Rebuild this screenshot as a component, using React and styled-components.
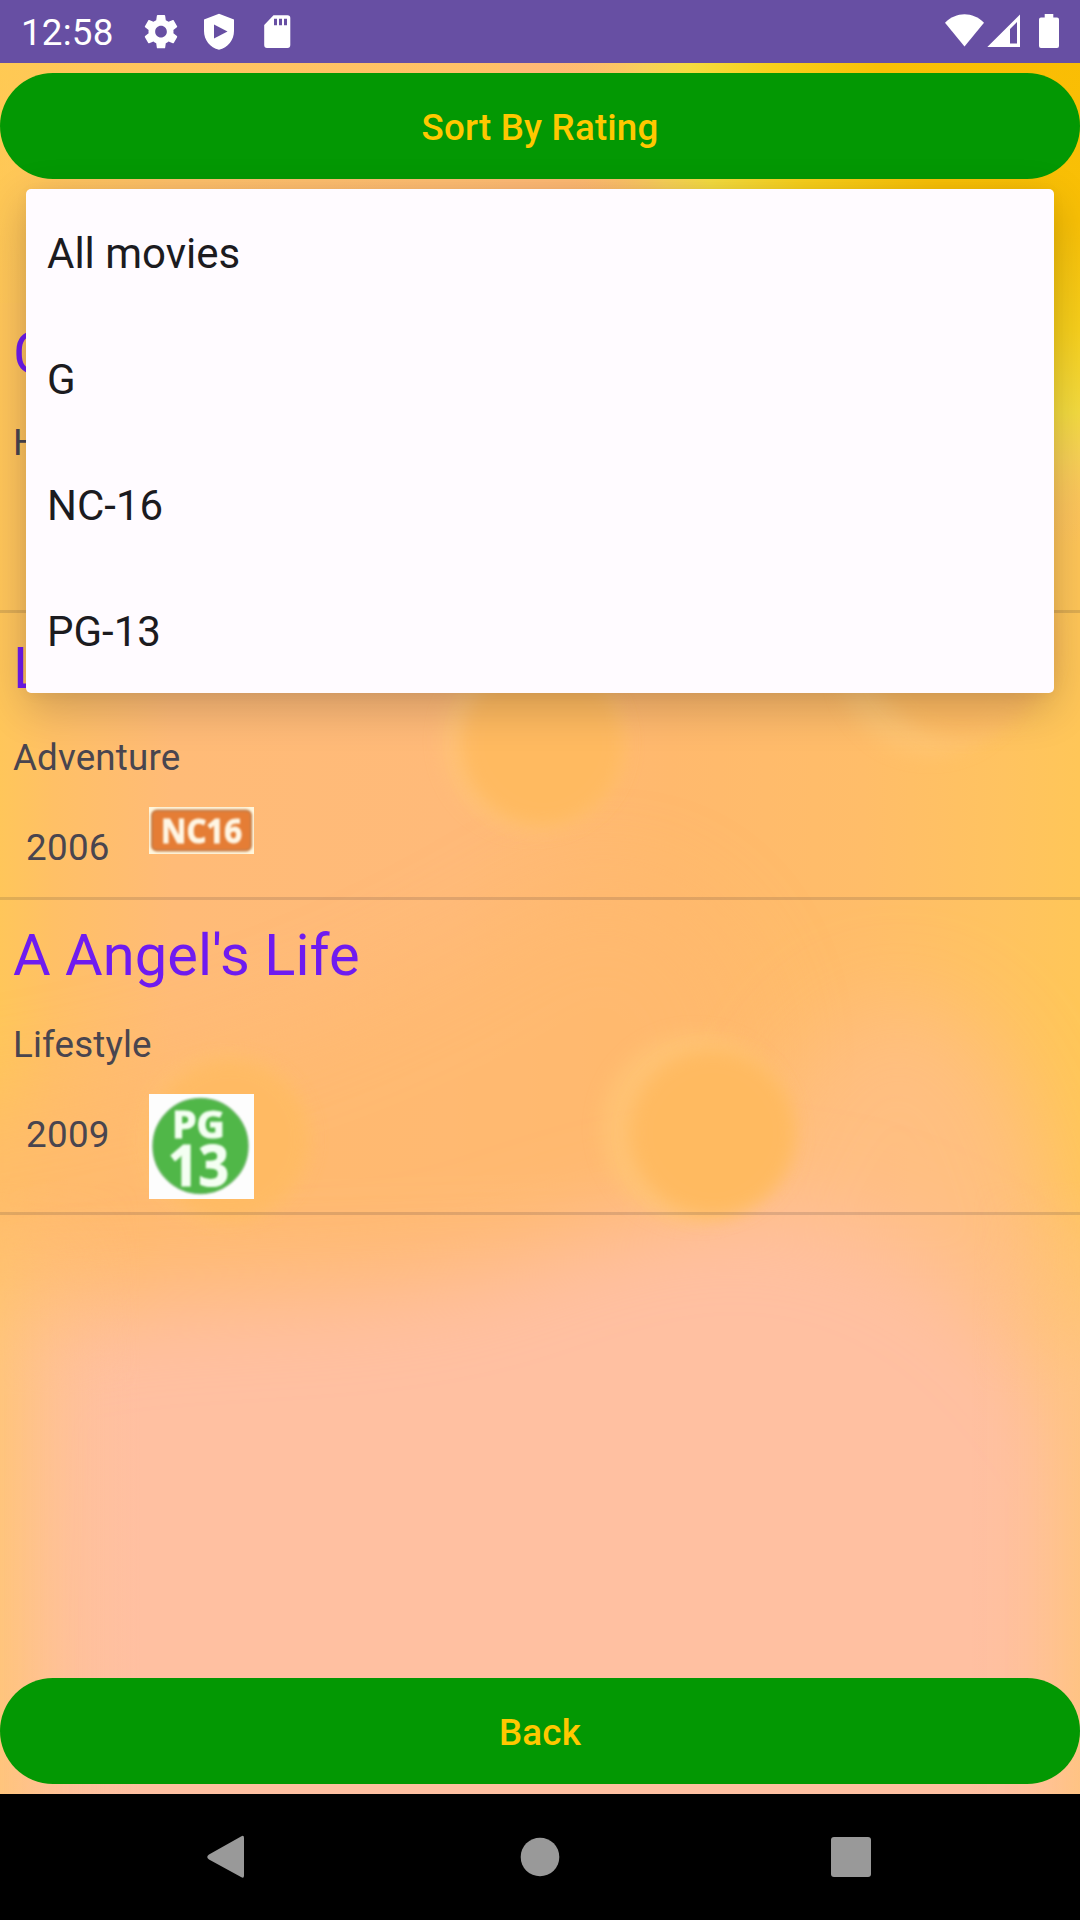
import React from "react";
import styled, { createGlobalStyle } from "styled-components";

const GlobalStyle = createGlobalStyle`
  * { box-sizing: border-box; }
  html, body { margin: 0; padding: 0; background: #000; }
`;

const Screen = styled.div`
  position: relative;
  display: flex;
  flex-direction: column;
  width: 1080px;
  height: 1920px;
  overflow: hidden;
  font-family: Roboto, "Noto Sans", sans-serif;
`;

const StatusBar = styled.header`
  display: flex;
  justify-content: space-between;
  height: 63px;
  padding: 0 21px 0 21px;
  background: #674fa3;
  color: #fff;
`;

const StatusGroup = styled.div`
  display: flex;
  align-items: center;
`;

const Clock = styled.span`
  width: 120px;
  font-size: 36.75px;
  line-height: 66px;
  padding-top: 3px;
  letter-spacing: 0.2px;
`;

const StatusIcon = styled.svg`
  display: block;
  width: ${(p) => p.$w}px;
  height: 63px;
  margin-left: ${(p) => p.$gap || 0}px;
  fill: #fff;
`;

const Content = styled.main`
  position: relative;
  display: flex;
  flex-direction: column;
  height: 1731px;
  padding: 10px 0;
`;

const Wallpaper = styled.svg`
  position: absolute;
  left: 0;
  top: 0;
  width: 1080px;
  height: 1731px;
`;

const PillButton = styled.button`
  position: relative;
  flex: none;
  height: 106px;
  border: 0;
  border-radius: 53px;
  padding: 3px 0 0;
  background: #039803;
  color: #ffc800;
  font: 500 36.75px/44px Roboto, "Noto Sans", sans-serif;
  letter-spacing: 0.18px;
`;

const SpinnerSlot = styled.div`
  position: relative;
  height: 119px;
  flex: none;
`;

const MovieList = styled.ul`
  position: relative;
  flex: 1;
  margin: 0;
  padding: 0;
  list-style: none;
`;

const MovieRow = styled.li`
  min-height: ${(p) => p.$minHeight || 0}px;
  padding: 13px;
  box-sizing: content-box;
  border-bottom: 3px solid rgba(30, 30, 40, 0.14);
`;

const Title = styled.div`
  height: 84px;
  font-size: 57.75px;
  line-height: 84px;
  letter-spacing: 0.06px;
  color: #6f1bf0;
`;

const Genre = styled.div`
  margin-top: 23px;
  height: 50px;
  font-size: 36.75px;
  line-height: 50px;
  letter-spacing: 0.15px;
  color: #49454f;
`;

const Details = styled.div`
  display: flex;
  align-items: flex-start;
  margin-top: 24px;
`;

const Year = styled.span`
  width: 136px;
  padding: 16px 0 11px 13px;
  font-size: 36.75px;
  line-height: 50px;
  letter-spacing: 0.3px;
  color: #49454f;
`;

const Badge = styled.svg`
  display: block;
  width: 105px;
  height: ${(p) => p.$h}px;
  overflow: visible;
`;

const Popup = styled.div`
  position: absolute;
  left: 26px;
  top: 189px;
  width: 1028px;
  display: flex;
  flex-direction: column;
  border-radius: 5px;
  background: #fffbff;
  box-shadow: 0 14px 46px rgba(0, 0, 0, 0.2), 0 2px 14px rgba(0, 0, 0, 0.04);
`;

const Option = styled.div`
  height: 126px;
  padding: 1px 21px 0;
  font-size: 42px;
  line-height: 127px;
  color: #1c1b1f;
`;

const NavBar = styled.nav`
  display: flex;
  height: 126px;
  background: #000;
`;

const NavIcon = styled.svg`
  display: block;
  width: 1080px;
  height: 126px;
  fill: #999;
`;

function Bubble({ rim, core, rimR = 94, coreR = 82, glow = 0.7, strength = 1 }) {
  return (
    <g>
      <circle cx={rim[0]} cy={rim[1]} r={rimR} fill="#ffc676" opacity={glow} filter="url(#softRim)" />
      <circle cx={core[0]} cy={core[1]} r={coreR} fill="#ffba60" opacity={strength} filter="url(#softCore)" />
    </g>
  );
}

function Backdrop() {
  return (
    <Wallpaper viewBox="0 63 1080 1731">
      <defs>
        <linearGradient id="base" x1="0" x2="1">
          <stop offset="0" stopColor="#ffc65a" />
          <stop offset="0.05" stopColor="#ffc066" />
          <stop offset="0.16" stopColor="#ffbb77" />
          <stop offset="0.42" stopColor="#ffba79" />
          <stop offset="0.62" stopColor="#ffb96d" />
          <stop offset="0.8" stopColor="#ffbd69" />
          <stop offset="0.93" stopColor="#ffc360" />
          <stop offset="1" stopColor="#ffc658" />
        </linearGradient>
        <linearGradient id="topLeft" x1="0" x2="0.5" y1="0" y2="1">
          <stop offset="0" stopColor="#ffcb50" />
          <stop offset="1" stopColor="#ffcb50" stopOpacity="0" />
        </linearGradient>
        <linearGradient id="edges" x1="0" x2="1">
          <stop offset="0" stopColor="#ffc47c" />
          <stop offset="0.05" stopColor="#ffc28c" stopOpacity="0.6" />
          <stop offset="0.13" stopColor="#ffc0a0" stopOpacity="0" />
          <stop offset="0.9" stopColor="#ffc0a0" stopOpacity="0" />
          <stop offset="0.96" stopColor="#ffc28e" stopOpacity="0.5" />
          <stop offset="1" stopColor="#ffc384" />
        </linearGradient>
        <linearGradient id="edgeFade" x1="0" x2="0" y1="0" y2="1">
          <stop offset="0" stopColor="#000" />
          <stop offset="0.35" stopColor="#fff" />
        </linearGradient>
        <mask id="edgeMask">
          <rect y="1180" width="1080" height="614" fill="url(#edgeFade)" />
        </mask>
        <radialGradient id="sun" gradientUnits="userSpaceOnUse" cx="1045" cy="56" r="490">
          <stop offset="0" stopColor="#fabd04" />
          <stop offset="0.34" stopColor="#f9c006" />
          <stop offset="0.56" stopColor="#f8d01c" />
          <stop offset="0.73" stopColor="#f5dc40" />
          <stop offset="0.82" stopColor="#f7d455" stopOpacity="0.85" />
          <stop offset="1" stopColor="#ffbf6b" stopOpacity="0" />
        </radialGradient>
        <filter id="softCore" x="-20%" y="-20%" width="140%" height="140%"><feGaussianBlur stdDeviation="9" /></filter>
        <filter id="softRim" x="-20%" y="-20%" width="140%" height="140%"><feGaussianBlur stdDeviation="9" /></filter>
        <filter id="softWave" x="-30%" y="-30%" width="160%" height="160%"><feGaussianBlur stdDeviation="46" /></filter>
      </defs>
      <rect y="63" width="1080" height="1731" fill="url(#base)" />
      <rect y="63" width="500" height="240" fill="url(#topLeft)" opacity="0.7" />
      <path d="M-100 1110C150 1080 350 1020 540 900C640 850 740 920 760 1050L700 1280L-100 1300Z" fill="#ffb96e" opacity="0.7" filter="url(#softWave)" />
      <path d="M690 1330C740 1160 800 1000 900 1000C980 1000 1050 1110 1070 1330Z" fill="#ffbf86" opacity="0.85" filter="url(#softWave)" />
      <path d="M-10 1340C120 1280 300 1315 480 1270C600 1230 700 1185 830 1220C960 1250 1040 1340 1110 1450L1110 1950L-40 1950Z" fill="#ffc0a1" filter="url(#softWave)" />
      <rect y="1180" width="1080" height="614" fill="url(#edges)" mask="url(#edgeMask)" />
      <rect y="63" width="1080" height="500" fill="url(#sun)" />
      <Bubble rim={[532, 741]} core={[543, 744]} rimR={90} coreR={81} glow={0.6} />
      <Bubble rim={[930, 663]} core={[962, 645]} rimR={92} coreR={92} strength={0.8} />
      <Bubble rim={[695, 1128]} core={[713, 1133]} />
      <Bubble rim={[222, 1139]} core={[230, 1139]} rimR={86} coreR={80} glow={0.4} strength={0.8} />
    </Wallpaper>
  );
}

const badgeFont = "'Open Sans', 'Noto Sans', sans-serif";

function Nc16Badge() {
  return (
    <Badge $h={47} viewBox="0 0 105 47">
      <rect width="105" height="47" fill="#fff6dc" />
      <g style={{ filter: "blur(0.9px)" }}>
        <rect x="3" y="3.5" width="99" height="40" rx="5" fill="#e57d35" stroke="#c47c48" strokeWidth="2" />
        <text x="12" y="36" textLength="81" lengthAdjust="spacingAndGlyphs" fontFamily={badgeFont} fontWeight="700" fontSize="34" fill="#fff6e4" stroke="#fff6e4" strokeWidth="1">NC16</text>
      </g>
    </Badge>
  );
}

function Pg13Badge() {
  return (
    <Badge $h={105} viewBox="0 0 105 105">
      <rect width="105" height="105" fill="#fdfdfd" />
      <g style={{ filter: "blur(0.9px)" }}>
        <circle cx="51.5" cy="52" r="47.5" fill="#50b748" stroke="#6cb767" strokeWidth="1.5" />
        <text fontFamily={badgeFont} fontWeight="700" fill="#f4fff2" stroke="#f4fff2" strokeWidth="1.2">
          <tspan x="23" y="44" fontSize="38" textLength="53" lengthAdjust="spacingAndGlyphs">PG</tspan>
          <tspan x="19" y="91.5" fontSize="57" textLength="61" lengthAdjust="spacingAndGlyphs">13</tspan>
        </text>
      </g>
    </Badge>
  );
}

const movies = [
  { title: "C", genre: "H", minHeight: 286 },
  { title: "L", genre: "Adventure", year: "2006", badge: <Nc16Badge /> },
  { title: "A Angel's Life", genre: "Lifestyle", year: "2009", badge: <Pg13Badge /> },
];

const ratings = ["All movies", "G", "NC-16", "PG-13"];

export default function App() {
  return (
    <>
      <GlobalStyle />
      <Screen>
        <StatusBar>
          <StatusGroup>
            <Clock>12:58</Clock>
            <StatusIcon $w={40} viewBox="0 0 40 63">
              <g transform="translate(0 11.7) scale(1.667)">
                <path d="M19.43 12.98c.04-.32.07-.64.07-.98s-.03-.66-.07-.98l2.11-1.65c.19-.15.24-.42.12-.64l-2-3.46c-.12-.22-.39-.3-.61-.22l-2.49 1c-.52-.4-1.08-.73-1.69-.98l-.38-2.65C14.46 2.18 14.25 2 14 2h-4c-.25 0-.46.18-.49.42l-.38 2.65c-.61.25-1.17.59-1.69.98l-2.49-1c-.23-.09-.49 0-.61.22l-2 3.46c-.13.22-.07.49.12.64l2.11 1.65c-.04.32-.07.65-.07.98s.03.66.07.98l-2.11 1.65c-.19.15-.24.42-.12.64l2 3.46c.12.22.39.3.61.22l2.49-1c.52.4 1.08.73 1.69.98l.38 2.65c.03.24.24.42.49.42h4c.25 0 .46-.18.49-.42l.38-2.65c.61-.25 1.17-.59 1.69-.98l2.49 1c.23.09.49 0 .61-.22l2-3.46c.12-.22.07-.49-.12-.64l-2.11-1.65zM12 15.5c-1.93 0-3.5-1.57-3.5-3.5s1.57-3.5 3.5-3.5 3.5 1.57 3.5 3.5-1.57 3.5-3.5 3.5z" />
              </g>
            </StatusIcon>
            <StatusIcon $w={30} $gap={23} viewBox="204 0 30 63">
              <path fillRule="evenodd" d="M219 13.7L234 19.5V31C234 40 228 47.500 219 49.800C210 47.500 204 40 204 31V19.500ZM214 24.500V38.500L227.500 31.500Z" />
            </StatusIcon>
            <StatusIcon $w={27} $gap={30} viewBox="264 0 27 63">
              <path fillRule="evenodd" d="M273.500 15.200H287.500Q290.300 15.200 290.300 18V45Q290.300 47.900 287.500 47.900H267Q264.200 47.900 264.200 45V25ZM274 18.700V25.300H277V18.700ZM279 18.700V25.300H282V18.700ZM284 18.700V25.300H287V18.700Z" />
            </StatusIcon>
          </StatusGroup>
          <StatusGroup>
            <StatusIcon $w={39} viewBox="945 0 39 63">
              <path d="M945 22.800C956 11.300 973 11.300 984 22.800L964.500 46.500Z" />
            </StatusIcon>
            <StatusIcon $w={33} $gap={3} viewBox="987 0 33 63">
              <path fillRule="evenodd" d="M987.300 47L1020 14.500V47ZM1010 29V43.500H1017V22Z" />
            </StatusIcon>
            <StatusIcon $w={20} $gap={19} viewBox="1039 0 20 63">
              <path d="M1044.700 14H1053.300V17.400H1057Q1059 17.400 1059 19.400V45.900Q1059 47.900 1057 47.900H1041Q1039 47.900 1039 45.900V19.400Q1039 17.400 1041 17.400H1044.700Z" />
            </StatusIcon>
          </StatusGroup>
        </StatusBar>
        <Content>
          <Backdrop />
          <PillButton>Sort By Rating</PillButton>
          <SpinnerSlot />
          <MovieList>
            {movies.map((m) => (
              <MovieRow key={m.genre} $minHeight={m.minHeight}>
                <Title>{m.title}</Title>
                <Genre>{m.genre}</Genre>
                {m.year && (
                  <Details>
                    <Year>{m.year}</Year>
                    {m.badge}
                  </Details>
                )}
              </MovieRow>
            ))}
          </MovieList>
          <PillButton>Back</PillButton>
        </Content>
        <NavBar>
          <NavIcon viewBox="0 1794 1080 126">
            <path d="M241 1836.500Q244 1834.500 244 1838V1875.500Q244 1879 241 1877L209 1859.500Q205.500 1857 209 1854.500Z" />
            <circle cx="540" cy="1857" r="19.300" />
            <rect x="831" y="1837" width="40" height="40" rx="3" />
          </NavIcon>
        </NavBar>
        <Popup>
          {ratings.map((r) => (
            <Option key={r}>{r}</Option>
          ))}
        </Popup>
      </Screen>
    </>
  );
}
